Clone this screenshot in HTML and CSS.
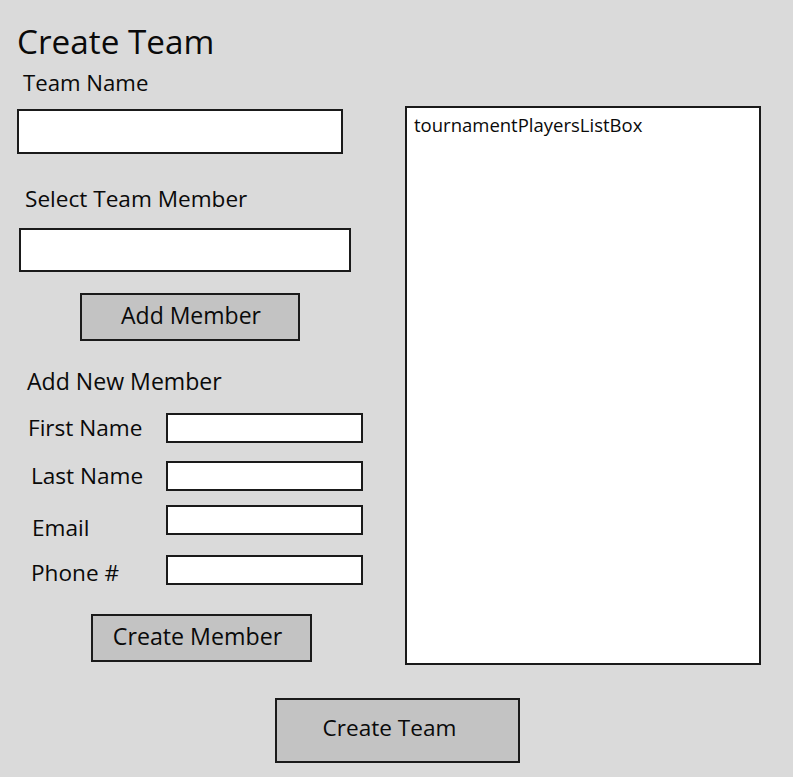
FILE: index.html
```html
<!DOCTYPE html>
<html lang="en">
<head>
  <meta charset="UTF-8" />
  <meta name="viewport" content="width=device-width, initial-scale=1.0" />
  <title>Create Team</title>
  <link rel="stylesheet" href="styles.css">
</head>
<body>
  <div class="main">
    <div class="left-col">
      <h1 class="form-title">Create Team</h1>
      <div class="label team-name-label">Team Name</div>
      <input type="text" class="textbox team-name-box">

      <div class="label select-label">Select Team Member</div>
      <input type="text" class="textbox select-box">
      <button class="btn add-member-btn">Add Member</button>

      <div class="label new-member-label">Add New Member</div>

      <div class="field-row row-first">
        <label class="field-label">First Name</label>
        <input type="text" class="textbox small-box">
      </div>
      <div class="field-row row-last">
        <label class="field-label">Last Name</label>
        <input type="text" class="textbox small-box">
      </div>
      <div class="field-row row-email">
        <label class="field-label">Email</label>
        <input type="text" class="textbox small-box">
      </div>
      <div class="field-row row-phone">
        <label class="field-label">Phone #</label>
        <input type="text" class="textbox small-box">
      </div>

      <button class="btn create-member-btn">Create Member</button>
    </div>

    <div class="players-list">
      <div class="list-item">tournamentPlayersListBox</div>
    </div>
  </div>

  <button class="btn create-team-btn">Create Team</button>
</body>
</html>
```

FILE: styles.css
```css
:root {
  --bg: #dadada;
  --border: #1a1a1a;
  --button-bg: #c3c3c3;
  --text: #0a0a0a;
}

body {
  margin: 0;
  background: var(--bg);
  color: var(--text);
  font-family: 'Open Sans', 'Noto Sans', sans-serif;
  font-size: 22.6px;
  line-height: 28px;
}

.main {
  display: flex;
  align-items: flex-start;
  padding-left: 17px;
}

.left-col {
  width: 388px;
  display: flex;
  flex-direction: column;
  align-items: flex-start;
}

.form-title {
  margin: 21px 0 0 0;
  font-size: 33.3px;
  line-height: 40px;
  font-weight: normal;
}

.label {
  margin: 0;
}

.team-name-label {
  margin: 8px 0 0 6px;
  font-size: 22.2px;
}

.textbox {
  box-sizing: border-box;
  border: 2px solid var(--border);
  background: #fff;
  margin: 0;
  padding: 0 6px;
  font: inherit;
  font-size: 18px;
}

.team-name-box {
  width: 326px;
  height: 45px;
  margin-top: 12px;
}

.select-label {
  margin: 31px 0 0 8px;
}

.select-box {
  width: 332px;
  height: 44px;
  margin: 15px 0 0 2px;
}

.btn {
  box-sizing: border-box;
  display: flex;
  align-items: center;
  justify-content: center;
  border: 2px solid var(--border);
  background: var(--button-bg);
  color: var(--text);
  font: inherit;
  padding: 0 0 5px;
}

.add-member-btn {
  width: 220px;
  height: 48px;
  margin: 21px 0 0 63px;
  padding-left: 2px;
  font-size: 23px;
}

.new-member-label {
  margin: 26px 0 0 10px;
  font-size: 23.1px;
}

.field-row {
  display: grid;
  grid-template-columns: 149px 197px;
  align-items: start;
}

.field-label {
  padding-left: 11px;
}

.small-box {
  height: 30px;
}

.row-first { margin-top: 18px; }
.row-first .field-label { margin-top: 1px; }

.row-last { margin-top: 18px; }
.row-last .field-label { margin-top: 1px; padding-left: 14px; }

.row-email { margin-top: 14px; }
.row-email .field-label { margin-top: 9px; padding-left: 15px; }

.row-phone { margin-top: 13px; }
.row-phone .field-label { margin-top: 4px; padding-left: 14px; }

.create-member-btn {
  width: 221px;
  height: 48px;
  margin: 27px 0 0 74px;
  padding-right: 8px;
  font-size: 23.2px;
}

.players-list {
  box-sizing: border-box;
  width: 356px;
  height: 559px;
  margin-top: 106px;
  border: 2px solid var(--border);
  background: #fff;
  padding: 5px 7px;
}

.list-item {
  font-size: 18.5px;
  line-height: 24px;
}

.create-team-btn {
  width: 245px;
  height: 65px;
  margin: 33px 0 0 275px;
  padding-right: 16px;
}
```
